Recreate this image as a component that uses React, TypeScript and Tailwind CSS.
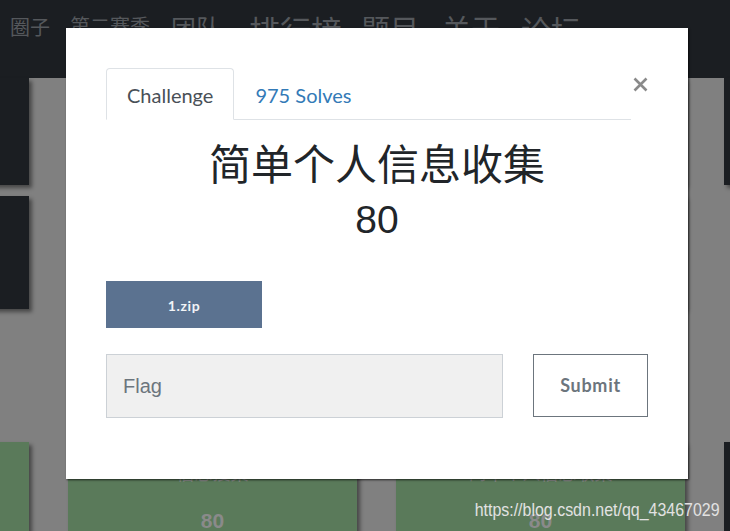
const cjk = "font-['Noto_Sans_CJK_SC','Noto_Sans',sans-serif]"
const lato = "font-['Lato','Noto_Sans',sans-serif]"
const arial = "font-['Liberation_Sans','Noto_Sans_CJK_SC',sans-serif]"

const cardShadow = 'shadow-[3px_3px_4px_rgba(0,0,0,0.45)]'

function DarkCard({ h }: { h: string }) {
  return <div className={`${h} bg-[#1b1e22] ${cardShadow}`} />
}

function SolvedCard({ title, value }: { title: string; value: string }) {
  return (
    <div className={`h-[120px] bg-[#5a7a5a] ${cardShadow} flex flex-col items-center pt-[19px] ${cjk}`}>
      <div className="text-[18px] leading-[22px] text-[#8c8c8c]">{title}</div>
      <div className={`mt-[25px] text-[21px] leading-[26px] font-bold text-[#8a8a8a] ${arial}`}>{value}</div>
    </div>
  )
}

function CloseIcon() {
  return (
    <svg width="15" height="15" viewBox="0 0 15 15" fill="none">
      <path d="M1.5 1.5 L13.5 13.5 M13.5 1.5 L1.5 13.5" stroke="#8a8a8a" strokeWidth="2.6" strokeLinecap="butt" />
    </svg>
  )
}

export default function App() {
  const nav = [
    { label: '第二赛季', cls: 'text-[20px] ml-[20px] mt-[16px]' },
    { label: '团队', cls: 'text-[25px] ml-[21px] mt-[15px]' },
    { label: '排行榜', cls: 'text-[31px] ml-[28px] mt-[14px]' },
    { label: '题目', cls: 'text-[29px] ml-[19px] mt-[14px]' },
    { label: '关于', cls: 'text-[29px] ml-[23px] mt-[14px]' },
    { label: '论坛', cls: 'text-[30px] ml-[21px] mt-[14px]' },
  ]

  return (
    <div className="relative w-[730px] h-[531px] overflow-hidden bg-[#808080]">
      {/* page underneath the dialog */}
      <nav className={`h-[78px] bg-[#1b1e22] flex items-start pl-[10px] text-[#55585c] ${cjk}`}>
        <span className="text-[20px] leading-none mt-[17px]">圈子</span>
        {nav.map((n) => (
          <span key={n.label} className={`leading-none whitespace-nowrap ${n.cls}`}>
            {n.label}
          </span>
        ))}
      </nav>

      <div className="ml-[-260px] w-[1400px]">
        <div className="grid grid-cols-[289px_289px_289px_289px] gap-x-[39px]">
          <DarkCard h="h-[107px]" />
          <DarkCard h="h-[107px]" />
          <DarkCard h="h-[107px]" />
          <DarkCard h="h-[107px]" />
        </div>
        <div className="mt-[11px] grid grid-cols-[289px_289px_289px_289px] gap-x-[39px]">
          <DarkCard h="h-[113px]" />
          <DarkCard h="h-[113px]" />
          <DarkCard h="h-[113px]" />
          <div />
        </div>
        <div className="mt-[133px] grid grid-cols-[289px_289px_289px_289px] gap-x-[39px]">
          <SolvedCard title="信息搜集" value="80" />
          <SolvedCard title="信息搜集" value="80" />
          <SolvedCard title="简单个人信息收集" value="80" />
          <DarkCard h="h-[120px]" />
        </div>
      </div>

      {/* challenge dialog */}
      <div className="absolute left-[66px] top-[28px] w-[622px] h-[451px] bg-white shadow-[1px_1px_2px_rgba(0,0,0,0.7)] px-[40px] pt-[40px]">
        <div className="flex items-start">
          <ul className={`flex flex-1 border-b border-[#dee2e6] ${lato}`}>
            <li className="-mb-px">
              <div className="px-[20px] pt-[13px] pb-[11px] text-[20px] leading-[26px] text-[#495057] bg-white border border-[#dee2e6] border-b-white rounded-t-[4px]">
                Challenge
              </div>
            </li>
            <li className="-mb-px">
              <div className="px-[20px] pt-[13px] pb-[11px] text-[20px] leading-[26px] text-[#337ab7] border border-transparent">
                975 Solves
              </div>
            </li>
          </ul>
          <button className="ml-[2px] mt-[9px] w-[15px] h-[15px] flex items-center justify-center">
            <CloseIcon />
          </button>
        </div>

        <div className="flex flex-col items-center text-[#212529]">
          <h2 className={`mt-[17px] text-[42px] leading-[50px] font-normal ${cjk}`}>简单个人信息收集</h2>
          <div className={`mt-[9px] text-[39px] leading-[48px] ${arial}`}>80</div>
        </div>

        <div className="mt-[37px]">
          <button className={`w-[156px] h-[47px] pt-[2px] bg-[#5b7290] text-[#f2f4f7] text-[14px] font-bold tracking-[0.6px] ${lato}`}>
            1.zip
          </button>
        </div>

        <div className="mt-[26px] flex gap-[30px]">
          <div className="flex-1 h-[64px] bg-[#f0f0f0] border border-[#ccd1d6] flex items-center pl-[16px]">
            <span className={`text-[20px] text-[#6c757d] ${arial}`}>Flag</span>
          </div>
          <button className={`w-[115px] h-[63px] border border-[#6c757d] text-[#6c757d] text-[18px] font-bold tracking-[0.7px] ${lato}`}>
            Submit
          </button>
        </div>
      </div>

      {/* watermark */}
      <div className={`absolute right-[10px] top-[498px] text-[19px] leading-[24px] text-[#e2e2e2] scale-x-[0.84] origin-right whitespace-nowrap ${arial}`}>
        https://blog.csdn.net/qq_43467029
      </div>
    </div>
  )
}
